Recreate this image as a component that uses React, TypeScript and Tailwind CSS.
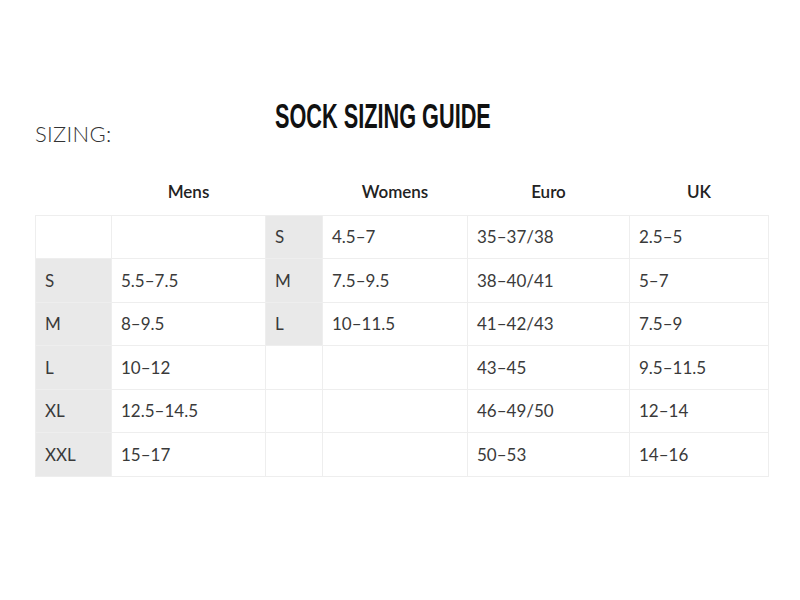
import React from "react";

const widths = [76, 154, 57, 145, 162, 139];

const rows: { cells: string[]; grey: boolean[] }[] = [
  { cells: ["", "", "S", "4.5–7", "35–37/38", "2.5–5"], grey: [false, false, true, false, false, false] },
  { cells: ["S", "5.5–7.5", "M", "7.5–9.5", "38–40/41", "5–7"], grey: [true, false, true, false, false, false] },
  { cells: ["M", "8–9.5", "L", "10–11.5", "41–42/43", "7.5–9"], grey: [true, false, true, false, false, false] },
  { cells: ["L", "10–12", "", "", "43–45", "9.5–11.5"], grey: [true, false, false, false, false, false] },
  { cells: ["XL", "12.5–14.5", "", "", "46–49/50", "12–14"], grey: [true, false, false, false, false, false] },
  { cells: ["XXL", "15–17", "", "", "50–53", "14–16"], grey: [true, false, false, false, false, false] },
];

const headers = ["", "Mens", "", "Womens", "Euro", "UK"];

export default function App() {
  return (
    <div
      className="w-[800px] h-[600px] bg-white text-[#3a3a3a]"
      style={{ fontFamily: "Lato, 'Open Sans', sans-serif" }}
    >
      <div className="flex items-start pl-[35px] pt-[98px]">
        <div className="mt-[24px] text-[22px] font-light leading-[24px] text-[#333] tracking-[0.3px]">
          SIZING:
        </div>
        <h1
          className="ml-[163px] text-[35px] font-bold leading-[36px] text-[#111] whitespace-nowrap origin-left scale-x-[0.62]"
          style={{ fontFamily: "'Liberation Sans', Arial, sans-serif" }}
        >
          SOCK SIZING GUIDE
        </h1>
      </div>
      <div className="pl-[35px] mt-[25px]">
        <table className="border-collapse table-fixed text-[17px]">
          <colgroup>
            {widths.map((w, i) => (
              <col key={i} style={{ width: w }} />
            ))}
          </colgroup>
          <thead>
            <tr className="h-[44px]">
              {headers.map((h, i) => (
                <th key={i} className="text-center font-semibold text-[17px] text-[#222] align-middle pb-[2px]">
                  {h}
                </th>
              ))}
            </tr>
          </thead>
          <tbody>
            {rows.map((r, ri) => (
              <tr key={ri} className="h-[43.5px]">
                {r.cells.map((c, ci) => (
                  <td
                    key={ci}
                    className={`border border-[#eeeeee] pl-[9px] align-middle text-left font-normal leading-none ${
                      r.grey[ci] ? "bg-[#e9e9e9]" : "bg-white"
                    }`}
                  >
                    {c}
                  </td>
                ))}
              </tr>
            ))}
          </tbody>
        </table>
      </div>
    </div>
  );
}
